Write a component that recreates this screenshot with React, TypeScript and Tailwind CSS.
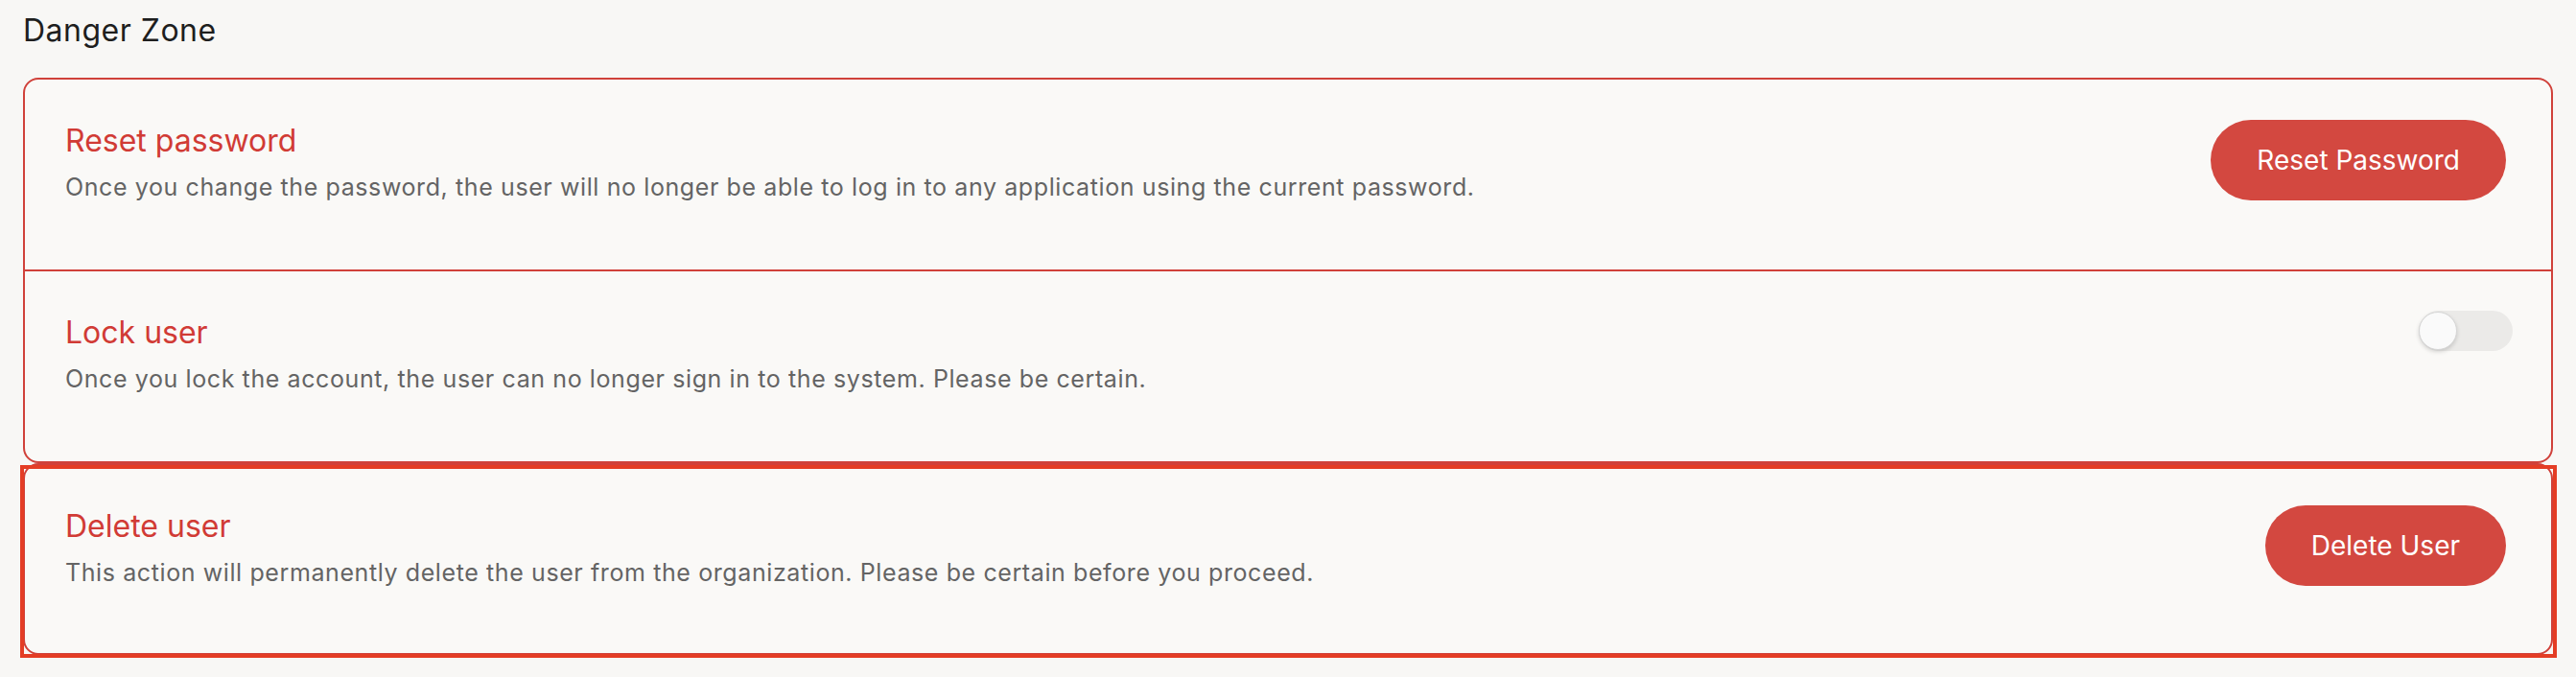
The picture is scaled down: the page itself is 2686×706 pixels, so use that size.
import React, { useState } from "react";

const font = { fontFamily: "Inter, 'Liberation Sans', sans-serif" };

type RowProps = {
  title: string;
  desc: string;
  action: React.ReactNode;
  className?: string;
};

const Row = ({ title, desc, action, className = "" }: RowProps) => (
  <div className={`flex items-start justify-between pl-[42px] pr-[47px] pt-[42px] ${className}`}>
    <div className="flex flex-col">
      <h3 className="text-[32px] leading-[44px] text-[#d13b35]">{title}</h3>
      <p className="mt-[8px] text-[25px] leading-[36px] tracking-[0.6px] text-[#646464]">{desc}</p>
    </div>
    {action}
  </div>
);

const DangerButton = ({ label }: { label: string }) => (
  <button
    type="button"
    className="h-[84px] rounded-full bg-[#d34840] px-[48px] text-[28px] text-white"
  >
    {label}
  </button>
);

const Toggle = () => {
  const [on, setOn] = useState(false);
  return (
    <button
      type="button"
      onClick={() => setOn(!on)}
      className={`-mr-[7px] -mt-[1px] flex h-[42px] w-[98px] items-center rounded-full ${
        on ? "justify-end bg-[#d34840]" : "justify-start bg-[#ebeae8]"
      }`}
    >
      <span className="h-[40px] w-[40px] rounded-full border border-[#d6d6d6] bg-[#fafafa] shadow-[0_2px_4px_rgba(0,0,0,0.15)]" />
    </button>
  );
};

export default function App() {
  return (
    <div className="min-h-screen bg-[#f8f7f5] px-[24px] pt-[12px] pb-[20px]" style={font}>
      <h2 className="text-[32px] leading-[40px] tracking-[0.5px] text-[#1e1e1e]">Danger Zone</h2>

      <div className="mt-[29px] rounded-2xl border-2 border-[#d0413a] bg-[#faf9f7]">
        <Row
          className="h-[198px]"
          title="Reset password"
          desc="Once you change the password, the user will no longer be able to log in to any application using the current password."
          action={<DangerButton label="Reset Password" />}
        />
        <Row
          className="h-[200px] border-t-2 border-[#d0413a]"
          title="Lock user"
          desc="Once you lock the account, the user can no longer sign in to the system. Please be certain."
          action={<Toggle />}
        />
      </div>

      <div className="relative">
        <div className="rounded-2xl border-2 border-[#d0413a] bg-[#faf9f7]">
          <Row
            className="h-[196px]"
            title="Delete user"
            desc="This action will permanently delete the user from the organization. Please be certain before you proceed."
            action={<DangerButton label="Delete User" />}
          />
        </div>
        {/* highlight outline over the delete row */}
        <div className="pointer-events-none absolute top-[2px] -bottom-[3px] -left-[3px] -right-[4px] border-4 border-[#e43d25]" />
      </div>
    </div>
  );
}
